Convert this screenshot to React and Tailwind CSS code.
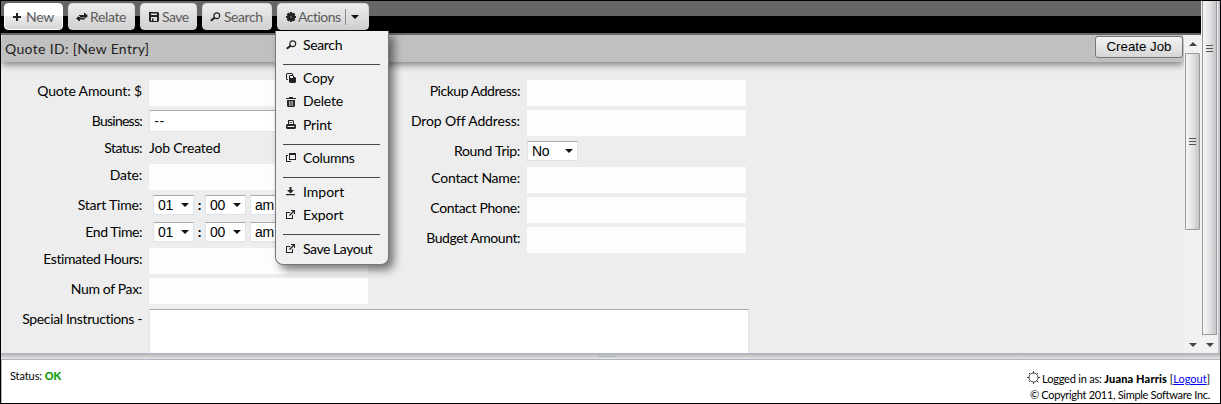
import React from 'react';

const paths = {
  plus: 'M4 1h2v3h3v2H6v3H4V6H1V4h3z',
  swap: 'M3 3h5V1h1l3 3-3 2.500H8V5H3zM0 6.500 3 4h1v1.500h5v2H4V9H3z',
  save: 'M0 0h9l1 1v8l-1 1H1L0 9zM2 1.500v1.500h6V1.500zM2 5v4h6V5zM3 6.500h1.500V9H3z',
  gear: 'M4 0h2v1.500L7.500.500 9.300 2.200 8.500 4H10v2H8.500l.8 1.800-1.800 1.700L6 8.500V10H4V8.500l-1.500 1L.7 7.800 1.500 6H0V4h1.500L.7 2.200 2.500.5 4 1.500zM4.400 4.400v1.200h1.200V4.400z',
  trash: 'M3 0h4v1h3v1H0V1h3zM1 3h8v6l-1 1H2L1 9zM3 4v5h.7V4zM4.700 4v5h.7V4zM6.400 4v5h.7V4z',
  print: 'M2 0h5l1 1v3h1l1 1v3L9 9H1L0 8V5l1-1h1zM3 1v3h4V1zM3.500 2h2.500v.8H3.500zM1.500 6v1h7V6z',
  copy: 'M1 0h5l1 1v1H6V1H1v5h1v1H1L0 6V1zM4 2h3l1 1v1l1 0 1 1v4L9 10H4L3 9V3zM4 3v2h3V3z',
  columns: 'M3 0h7v7H3zM4 2v4h5V2zM0 2h2v1H1v5h4v1H0z',
  import: 'M3.500 0h2v3H8L4.500 6.500 1 3h2.500zM0 7h9v1.300H0z',
  export: 'M0 2h4v1H1v5h5V5h1v4H0zM5 0h4v4H8V2L4 6 3 5l4-4H5z',
};

function Icon({ name, className = '' }) {
  if (name === 'search') {
    return (
      <svg width="11" height="10" viewBox="0 0 11 10" className={`-mr-px shrink-0 ${className}`}>
        <circle cx="6.800" cy="3.700" r="2.900" fill="none" stroke="#222" strokeWidth="1.200" />
        <path d="M4.600 5.700.8 8.800" stroke="#222" strokeWidth="2" />
      </svg>
    );
  }
  const w = name === 'swap' ? 12 : 10;
  return (
    <svg width={w} height="10" viewBox={`0 0 ${w} 10`} className={`shrink-0 ${className}`} fill="#222" fillRule="evenodd">
      <path d={paths[name]} />
    </svg>
  );
}

function Caret({ className = '', fill = '#111' }) {
  return (
    <svg width="8" height="4" viewBox="0 0 8 4" className={`shrink-0 ${className}`}>
      <path d="M0 0h8L4 4z" fill={fill} />
    </svg>
  );
}

function ToolButton({ icon, label, className, children, text = '' }) {
  return (
    <div className={`flex h-[27px] shrink-0 items-center rounded-[4px] border text-[#5c5c5c] ${className}`}>
      <Icon name={icon} />
      <span className={`whitespace-nowrap text-[14px] ${text}`}>{label}</span>
      {children}
    </div>
  );
}

const plain = 'border-[#d8d8d8] bg-linear-to-b from-[#ededed] to-[#d0d0d0]';

function MenuItem({ icon, label, className, text = '' }) {
  return (
    <div className={`flex items-center pb-px pl-[10px] ${className}`}>
      <Icon name={icon} />
      <span className={`mb-[2px] ml-[7px] whitespace-nowrap text-[14px] ${text}`}>{label}</span>
    </div>
  );
}

function Separator() {
  return <div className="ml-[7px] h-px w-[97px] bg-[#484848]" />;
}

function Row({ label, tall = true, text = '', labelWidth, children }) {
  return (
    <div className={`flex items-start gap-[7px] ${tall ? 'h-[30px]' : 'h-[27px]'}`}>
      <div className={`${labelWidth} shrink-0 whitespace-nowrap pt-[3px] text-right leading-[20px] ${text}`}>{label}</div>
      {children}
    </div>
  );
}

function Field() {
  return <div className="mt-[2px] h-[26px] w-[219px] bg-[#fdfdfd]" />;
}

function Select({ value, className }) {
  return (
    <div className={`mt-[3px] flex h-[20px] items-center justify-between border border-[#dfe2ea] border-t-[#a9a9ad] bg-white pr-[4px] pl-[4px] font-['Liberation_Sans'] text-[14px] tracking-[-0.4px] ${className}`}>
      <span>{value}</span>
      <Caret />
    </div>
  );
}

function TimeSelects() {
  return (
    <div className="flex pl-[4px]">
      <Select value="01" className="w-[41px]" />
      <span className="w-[11px] pt-[3px] text-center font-bold leading-[20px]">:</span>
      <Select value="00" className="w-[41px]" />
      <Select value="am" className="ml-[4px] w-[46px]" />
    </div>
  );
}

const L = 'w-[141px]';
const R = 'w-[120px]';

function Grip() {
  return (
    <div className="flex flex-col gap-[2px]">
      <div className="h-px w-[7px] bg-[#555]" />
      <div className="h-px w-[7px] bg-[#555]" />
      <div className="h-px w-[7px] bg-[#555]" />
    </div>
  );
}

export default function App() {
  return (
    <div className="flex h-[404px] w-[1221px] flex-col overflow-hidden border border-black bg-white font-[Lato,sans-serif] text-[14px] text-black">
      <div className="flex h-[352px] shrink-0">
        <div className="flex w-[1200px] shrink-0 flex-col">
          <div className="relative flex h-[34px] shrink-0 items-start border-b-2 border-[#666] bg-linear-to-b from-[#666] from-[15px] to-black to-[15px] pt-[2px] pl-[3px]">
            <ToolButton icon="plus" label="New" text="ml-[4px] tracking-[-0.3px]" className="w-[59px] border-white bg-linear-to-b from-white from-45% via-[#ececec] via-50% to-[#d4d4d4] pl-[7px]" />
            <ToolButton icon="swap" label="Relate" text="ml-[2px] tracking-[-0.35px]" className={`ml-[5px] w-[67px] pl-[7px] ${plain}`} />
            <ToolButton icon="save" label="Save" text="ml-[3px] tracking-[-0.5px]" className={`ml-[5px] w-[57px] pl-[8px] ${plain}`} />
            <ToolButton icon="search" label="Search" text="ml-[4px] tracking-[-0.45px]" className={`ml-[5px] w-[70px] pl-[7px] ${plain}`} />
            <ToolButton icon="gear" label="Actions" text="ml-[2px] tracking-[-0.5px]" className={`ml-[5px] w-[92px] pl-[8px] ${plain}`}>
              <div className="ml-auto h-[16px] w-px shrink-0 bg-[#888]" />
              <Caret className="mr-[9px] ml-[5px]" />
            </ToolButton>

            <div className="absolute top-[30px] left-[274px] z-10 flex h-[234px] w-[114px] flex-col rounded-b-[8px] border border-t-0 border-[#777] bg-[#f0f0f0] shadow-[5px_5px_9px_rgba(0,0,0,0.5)]">
              <MenuItem icon="search" label="Search" text="tracking-[-0.35px]" className="h-[29px]" />
              <div className="h-[4px]" />
              <Separator />
              <div className="h-[2px]" />
              <MenuItem icon="copy" label="Copy" text="tracking-[-0.25px]" className="h-[23px]" />
              <MenuItem icon="trash" label="Delete" text="tracking-[-0.15px]" className="h-[24px]" />
              <MenuItem icon="print" label="Print" text="tracking-[-0.2px]" className="h-[23px]" />
              <div className="h-[7px]" />
              <Separator />
              <div className="h-[2px]" />
              <MenuItem icon="columns" label="Columns" text="tracking-[-0.3px]" className="h-[23px]" />
              <div className="h-[7px]" />
              <Separator />
              <div className="h-[3px]" />
              <MenuItem icon="import" label="Import" className="h-[23px]" />
              <MenuItem icon="export" label="Export" text="tracking-[-0.1px]" className="h-[23px]" />
              <div className="h-[7px]" />
              <Separator />
              <div className="h-[3px]" />
              <MenuItem icon="export" label="Save Layout" text="tracking-[-0.45px]" className="h-[23px]" />
            </div>
          </div>

          <div className="flex h-[318px]">
            <div className="flex w-[1183px] shrink-0 flex-col overflow-hidden bg-[#ededed]">
              <div className="mr-[1px] ml-[1px] flex h-[27px] shrink-0 items-start justify-between bg-[#c0c0c0] pt-px pl-[3px] text-[#222] shadow-[0_3px_7px_rgba(0,0,0,0.45)]">
                <span className="pt-[3px] leading-[20px] tracking-[0.33px]">Quote ID: [New Entry]</span>
                <div className="flex h-[22px] w-[88px] items-center justify-center rounded-[3px] border border-[#777] bg-linear-to-b from-[#f4f4f4] to-[#d6d6d6] font-['Liberation_Sans'] text-[13.3px] text-black">
                  Create Job
                </div>
              </div>
              <div className="flex h-[228px] shrink-0 pt-[16px]">
                <div className="w-[399px] shrink-0">
                  <Row labelWidth={L} text="tracking-[-0.14px]" label="Quote Amount: $"><Field /></Row>
                  <Row labelWidth={L} text="tracking-[-0.75px]" label="Business:" tall={false}>
                    <div className="mt-[2px] h-[22px] w-[219px] border border-[#dfe2ea] border-t-[#a9a9ad] bg-white pl-[4px] leading-[20px]">--</div>
                  </Row>
                  <Row labelWidth={L} text="tracking-[-0.55px]" label="Status:" tall={false}>
                    <span className="pt-[3px] leading-[20px] tracking-[-0.2px]">Job Created</span>
                  </Row>
                  <Row labelWidth={L} text="tracking-[-0.2px]" label="Date:"><Field /></Row>
                  <Row labelWidth={L} text="tracking-[-0.2px]" label="Start Time:" tall={false}><TimeSelects /></Row>
                  <Row labelWidth={L} text="tracking-[-0.45px]" label="End Time:" tall={false}><TimeSelects /></Row>
                  <Row labelWidth={L} text="tracking-[-0.42px]" label="Estimated Hours:"><Field /></Row>
                  <Row labelWidth={L} text="tracking-[-0.35px]" label="Num of Pax:"><Field /></Row>
                  <Row labelWidth={L} text="tracking-[-0.37px]" label="Special Instructions -">
                    <div className="mt-[3px] h-[60px] w-[600px] shrink-0 border border-[#dfe2ea] border-t-[#a9a9ad] bg-white" />
                  </Row>
                </div>
                <div>
                  <Row labelWidth={R} text="tracking-[-0.45px]" label="Pickup Address:"><Field /></Row>
                  <Row labelWidth={R} text="tracking-[-0.13px]" label="Drop Off Address:"><Field /></Row>
                  <Row labelWidth={R} text="tracking-[-0.3px]" label="Round Trip:" tall={false}><Select value="No" className="w-[51px]" /></Row>
                  <Row labelWidth={R} text="tracking-[-0.25px]" label="Contact Name:"><Field /></Row>
                  <Row labelWidth={R} text="tracking-[-0.38px]" label="Contact Phone:"><Field /></Row>
                  <Row labelWidth={R} text="tracking-[-0.46px]" label="Budget Amount:"><Field /></Row>
                </div>
              </div>
            </div>
            <div className="flex w-[17px] flex-col items-center bg-[#f1f1f1]">
              <Caret fill="#444" className="mt-[7px] mb-[7px] rotate-180" />
              <div className="flex h-[177px] w-[15px] items-center justify-center rounded-[1px] border border-[#999] bg-linear-to-r from-[#f6f6f6] via-[#e4e4e6] to-[#c4c4c8]"><Grip /></div>
              <Caret fill="#444" className="mt-auto mb-[6px]" />
            </div>
          </div>
        </div>
        <div className="flex w-[17px] flex-col items-center bg-[#f1f1f1]">
          <div className="flex h-[334px] w-[15px] justify-center border border-t-0 border-[#999] bg-linear-to-r from-[#f6f6f6] via-[#e4e4e6] to-[#c4c4c8] pt-[44px]"><Grip /></div>
          <Caret fill="#444" className="mt-auto mb-[6px]" />
        </div>
        <div className="w-[2px] bg-[#c3c6d2]" />
      </div>
      <div className="flex h-[7px] shrink-0 border-t border-b border-[#b0b3c0] bg-linear-to-b from-[#b4b4b4] to-[#e8e8e8] pt-[2px] pl-[597px]">
        <div className="h-px w-[19px] bg-[#adb3cc]" />
      </div>
      <div className="flex h-[43px] justify-between border-l border-[#b0b3c0] pr-[10px] pl-[8px] text-[11px]">
        <div className="pt-[8px] leading-[16px] tracking-[-0.1px]">Status: <b className="font-black text-[#0a9a0a]">OK</b></div>
        <div className="pt-[11px] text-right leading-[16px]">
          <div className="flex items-center justify-end">
            <svg width="13" height="13" viewBox="0 0 13 13" className="mr-[2px] mb-[3px]" fill="none" stroke="#444">
              <circle cx="6.500" cy="6.500" r="4.500" />
              <path d="M6.500 0v2.500M6.500 11v2M0 6.500h2M11 6.500h2M2 2l1.500 1.500M9.500 9.500 11 11M11 2 9.500 3.500M3.500 9.500 2 11" />
            </svg>
            <span><span className="tracking-[-0.2px]">Logged in as: </span><b className="font-black tracking-[0.15px]">Juana Harris</b> [<span className="text-[#0000ee] underline">Logout</span>]</span>
          </div>
          <div className="tracking-[-0.3px]">© Copyright 2011, Simple Software Inc.</div>
        </div>
      </div>
    </div>
  );
}
